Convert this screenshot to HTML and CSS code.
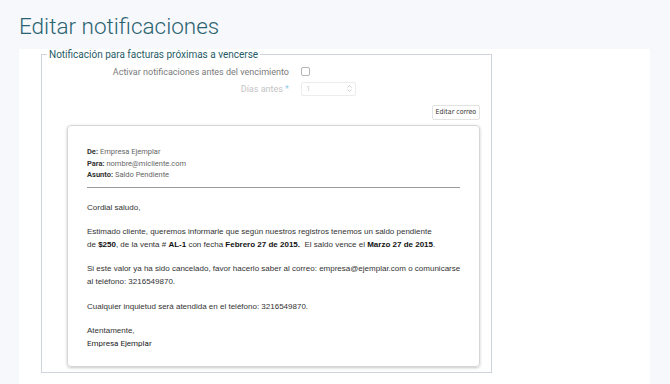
FILE: index.html
```html
<!DOCTYPE html>
<html lang="es">
<head>
<meta charset="utf-8">
<title>Editar notificaciones</title>
<link rel="stylesheet" href="styles.css">
</head>
<body>
<h1 class="title">Editar notificaciones</h1>
<div class="panel">
  <fieldset class="group">
    <legend class="legend">Notificación para facturas próximas a vencerse</legend>
    <div class="group-body">
      <div class="row">
        <label class="label" for="act">Activar notificaciones antes del vencimiento</label>
        <span class="check" id="act"></span>
      </div>
      <div class="row">
        <label class="label label-disabled">Días antes <span class="req">*</span></label>
        <span class="num">
          <span class="num-val">1</span>
          <span class="spin">
            <svg width="5" height="9" viewBox="0 0 5 9"><path d="M0.5 3.5 L2.5 1.5 L4.5 3.5" fill="none" stroke="#c8c8c8" stroke-width="0.9"/><path d="M0.5 5.5 L2.5 7.5 L4.5 5.5" fill="none" stroke="#c8c8c8" stroke-width="0.9"/></svg>
          </span>
        </span>
      </div>
      <div class="actions">
        <button class="btn" type="button">Editar correo</button>
      </div>
      <div class="card">
        <div class="meta">
          <div><b>De:</b> Empresa Ejemplar</div>
          <div><b>Para:</b> nombre@micliente.com</div>
          <div><b>Asunto:</b> Saldo Pendiente</div>
        </div>
        <hr class="rule">
        <div class="mail">
          <p>Cordial saludo,</p>
          <p>Estimado cliente, queremos informarle que según nuestros registros tenemos un saldo pendiente<br>de <b>$250</b>, de la venta # <b>AL-1</b> con fecha <b>Febrero 27 de 2015.</b>&nbsp; El saldo vence el <b>Marzo 27 de 2015</b>.</p>
          <p>Si este valor ya ha sido cancelado, favor hacerlo saber al correo: empresa@ejemplar.com o comunicarse<br>al teléfono: 3216549870.</p>
          <p>Cualquier inquietud será atendida en el teléfono: 3216549870.</p>
          <p>Atentamente,<br><span class="sign">Empresa Ejemplar</span></p>
        </div>
      </div>
    </div>
  </fieldset>
</div>
</body>
</html>
```
FILE: styles.css
```css
html, body {
  margin: 0;
  padding: 0;
  background: #f7f8fc;
  height: 100%;
}
body {
  font-family: Roboto, "Liberation Sans", sans-serif;
  overflow: hidden;
}
.title {
  margin: 0;
  padding: 11px 0 0 19px;
  height: 49px;
  box-sizing: border-box;
  font-family: Roboto, sans-serif;
  font-weight: 300;
  font-size: 22.5px;
  line-height: 30px;
  color: #2a6370;
}
.panel {
  margin-left: 19px;
  width: 631px;
  background: #fff;
  min-height: 335px;
}
.group {
  margin: 0 0 0 22px;
  padding: 0;
  width: 449px;
  box-sizing: border-box;
  border: 1px solid #cfd3dc;
}
.legend {
  margin-left: 5px;
  padding: 0 2px;
  font-size: 10px;
  line-height: 11px;
  color: #275c67;
}
.group-body {
  padding: 3px 11px 5px 25px;
}
.row {
  display: flex;
  align-items: center;
  height: 17px;
}
.label {
  width: 233px;
  margin-left: -11px;
  padding-right: 12px;
  text-align: right;
  font-size: 9px;
  color: #7a7a7a;
}
.label-disabled {
  color: #c4c4c4;
}
.req {
  color: #8fd0ea;
}
.check {
  width: 7px;
  height: 7px;
  border: 1px solid #b5b5b5;
  border-radius: 2px;
  background: #fff;
}
.num {
  display: flex;
  align-items: center;
  justify-content: space-between;
  width: 55px;
  height: 14px;
  box-sizing: border-box;
  border: 1px solid #ececec;
  border-radius: 2px;
  padding: 0 3px 0 4px;
  font-size: 8px;
  color: #cfcfcf;
}
.spin {
  display: flex;
}
.actions {
  display: flex;
  justify-content: flex-end;
  margin-top: 8px;
}
.btn {
  font-family: "Liberation Sans Narrow", "DejaVu Sans Condensed", Roboto, sans-serif;
  font-stretch: condensed;
  font-size: 7px;
  height: 15px;
  padding: 0 3px;
  line-height: 13px;
  background: #fff;
  color: #333;
  border: 1px solid #e3e3e3;
  border-radius: 2px;
}
.card {
  margin-top: 5px;
  border: 1px solid #d6d6d6;
  border-radius: 4px;
  box-shadow: 0 1px 3px rgba(0,0,0,0.22);
  padding: 20px 19px 17px 19px;
  height: 242px;
  box-sizing: border-box;
}
.meta {
  font-size: 7.5px;
  line-height: 11.5px;
  color: #666;
}
.meta b {
  color: #333;
  font-weight: 700;
}
.rule {
  margin: 6px 0 0 0;
  border: 0;
  border-top: 1px solid #9a9a9a;
}
.mail {
  font-family: "Liberation Sans", Arial, sans-serif;
  font-size: 8px;
  line-height: 12.8px;
  color: #333;
  padding-top: 14px;
}
.mail p {
  margin: 0 0 11.8px 0;
  white-space: nowrap;
}
.mail b {
  color: #111;
}
.sign {
  font-family: Roboto, sans-serif;
  color: #222;
}
```
